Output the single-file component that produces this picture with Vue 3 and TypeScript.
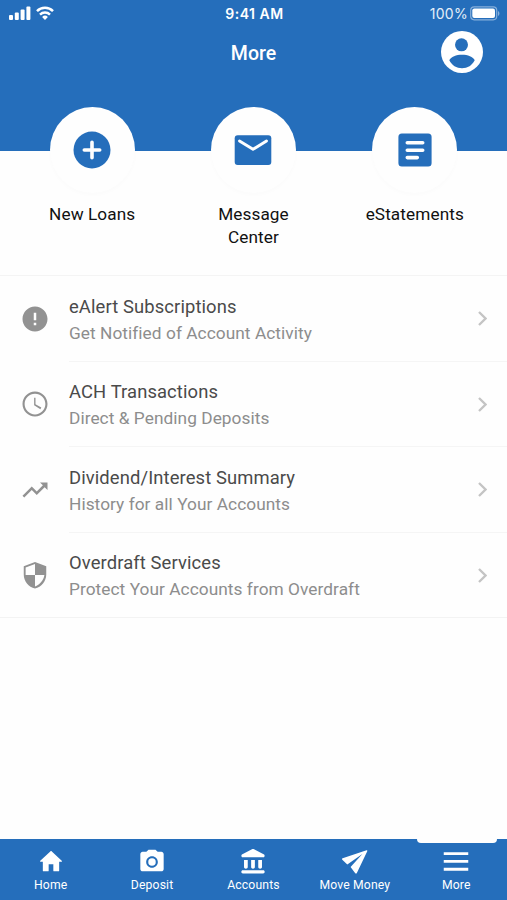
<script setup lang="ts">
interface Shortcut {
  icon: 'plus' | 'mail' | 'doc'
  label: string
}
interface Row {
  title: string
  text: string
  path: string
}
interface Tab {
  label: string
  path: string
  active?: boolean
}

const shortcuts: Shortcut[] = [
  { icon: 'plus', label: 'New Loans' },
  { icon: 'mail', label: 'Message Center' },
  { icon: 'doc', label: 'eStatements' },
]

const rows: Row[] = [
  {
    title: 'eAlert Subscriptions',
    text: 'Get Notified of Account Activity',
    path: 'M12 2C6.480 2 2 6.480 2 12s4.480 10 10 10 10-4.480 10-10S17.520 2 12 2zm1 15h-2v-2h2v2zm0-4h-2V7h2v6z',
  },
  {
    title: 'ACH Transactions',
    text: 'Direct & Pending Deposits',
    path: 'M11.990 2C6.470 2 2 6.480 2 12s4.470 10 9.990 10C17.520 22 22 17.520 22 12S17.520 2 11.990 2zM12 20.300c-4.600 0-8.300-3.700-8.300-8.300s3.700-8.300 8.300-8.300 8.300 3.700 8.300 8.300-3.700 8.300-8.300 8.300zm.4-13.300H11.300v6l5 3.100.75-1.230-4.650-2.700z',
  },
  {
    title: 'Dividend/Interest Summary',
    text: 'History for all Your Accounts',
    path: 'M16 6l2.290 2.290-4.880 4.880-4-4L2 16.590 3.410 18l6-6 4 4 6.300-6.290L22 12V6z',
  },
  {
    title: 'Overdraft Services',
    text: 'Protect Your Accounts from Overdraft',
    path: 'M12 1.500L3 5v6.500c0 5.300 3.840 10 9 11.300 5.160-1.300 9-6 9-11.300V5l-9-3.500zm0 10.490h7.500c-.53 4.120-3.780 7.990-7.500 9.140V12H4.500V6l7.500-2.900v8.890z',
  },
]

const tabs: Tab[] = [
  { label: 'Home', path: 'M10 19.500v-5.500h4v5.500c0 .3.2.5.5.5H18.500c.3 0 .5-.2.5-.5V11.800h1.900c.5 0 .7-.6.3-.9L12.700 2.900c-.4-.3-.9-.3-1.300 0L2.800 10.900c-.3.3-.1.900.3.900H5v7.700c0 .3.2.5.5.5h4c.3 0 .5-.2.5-.5z' },
  { label: 'Deposit', path: 'M12 8.800a3.200 3.200 0 1 0 0 6.400a3.200 3.200 0 1 0 0-6.400zM9 1.500L7.170 3.300H4c-1.100 0-2 .9-2 2v12.700c0 1.100.9 2 2 2h16c1.100 0 2-.9 2-2V5.300c0-1.100-.9-2-2-2h-3.170L15 1.500H9zm3 15.500c-2.760 0-5-2.240-5-5s2.240-5 5-5 5 2.240 5 5-2.240 5-5 5z' },
  { label: 'Accounts', path: 'M4.300 10.200v6c0 .8.700 1.500 1.600 1.500s1.600-.7 1.600-1.500v-6zM10.400 10.200v6c0 .8.700 1.500 1.600 1.500s1.600-.7 1.600-1.500v-6zM16.500 10.200v6c0 .8.700 1.500 1.600 1.500s1.600-.7 1.600-1.500v-6zM3.300 19h17.400c.9 0 1.300.600 1.300 1.400s-.5 1.400-1.300 1.400H3.300c-.8 0-1.300-.6-1.300-1.400s.5-1.400 1.300-1.400zM11.100 1.100L2.500 5.600c-.8.500-.5 2.300.5 2.300h18c1 0 1.300-1.800.5-2.300l-8.600-4.500c-.6-.3-1.200-.3-1.800 0z' },
  { label: 'Move Money', path: 'M21.900 1.900L1.400 8.800c-.6.200-.7.800-.3 1.200l4.300 4.200L18.300 5.100 8.200 16.200l4 5.400c.4.500 1.100.5 1.400-.1L22.500 2.700c.2-.5-.1-.9-.6-.8z' },
  { label: 'More', path: 'M1.500 3.600h21v2.400h-21zM1.500 10.300h21v2.400h-21zM1.500 17h21v2.400h-21z', active: true },
]
</script>

<template>
  <div class="screen">
    <header class="header">
      <div class="status">
        <div class="signals">
          <svg class="bars" viewBox="0 0 22 14">
            <rect x="0" y="9" width="4" height="5" rx="1" />
            <rect x="5.800" y="6.500" width="4" height="7.500" rx="1" />
            <rect x="11.600" y="3.500" width="4" height="10.500" rx="1" />
            <rect x="17.400" y="0.500" width="4" height="13.500" rx="1" />
          </svg>
          <svg class="wifi" viewBox="0 0 18 14">
            <path d="M1 5.100a11.300 11.300 0 0 1 16 0M4 8.600a7.200 7.200 0 0 1 10 0" />
            <path class="dot" d="M9 14l-2.900-3a4.200 4.200 0 0 1 5.800 0z" />
          </svg>
        </div>
        <div class="time">9:41 AM</div>
        <div class="power">
          <span>100%</span>
          <svg class="battery" viewBox="0 0 30 15">
            <rect class="case" x="0.700" y="0.800" width="26" height="13" rx="3.500" />
            <rect x="2.300" y="2.500" width="22.700" height="9.600" rx="2" />
            <path class="tip" d="M28 5v5c1.900-.8 1.900-4.200 0-5z" />
          </svg>
        </div>
      </div>
      <div class="bar">
        <h1>More</h1>
        <svg class="avatar" viewBox="0 0 42 42">
          <circle cx="21" cy="21" r="21" fill="#fff" />
          <circle cx="20.500" cy="13.800" r="6.500" fill="#256ebb" />
          <path d="M8.300 29.300c1.500-3.700 7-5.600 12.700-5.600s11.200 1.900 12.700 5.600c-2.500 5-7.200 8-12.700 8s-10.200-3-12.700-8z" fill="#256ebb" />
        </svg>
      </div>
    </header>

    <section class="shortcuts">
      <div v-for="s in shortcuts" :key="s.label" class="shortcut">
        <div class="disc">
          <svg v-if="s.icon === 'plus'" viewBox="0 0 42 42">
            <circle cx="21" cy="21" r="18.500" fill="#256ebb" />
            <path d="M21 13.300v15.400M13.300 21h15.400" class="stroke" />
          </svg>
          <svg v-else-if="s.icon === 'mail'" viewBox="0 0 42 42">
            <rect x="2.700" y="6.300" width="36.600" height="29.700" rx="3" fill="#256ebb" />
            <path d="M7.500 12L21 20.300 34.500 12" class="stroke thin" />
          </svg>
          <svg v-else viewBox="0 0 42 42">
            <rect x="4.400" y="4.400" width="33.200" height="33.200" rx="3.500" fill="#256ebb" />
            <path d="M13.300 13.800h15.400M13.300 21.200h15.400M13.300 28.600h10" class="stroke" />
          </svg>
        </div>
        <div class="caption">{{ s.label }}</div>
      </div>
    </section>

    <ul class="list">
      <li v-for="r in rows" :key="r.title" class="row">
        <svg class="row-icon" viewBox="0 0 24 24"><path :d="r.path" /></svg>
        <div class="row-body">
          <div class="row-text">
            <div class="row-title">{{ r.title }}</div>
            <div class="row-sub">{{ r.text }}</div>
          </div>
          <svg class="chevron" viewBox="0 0 9 15"><path d="M1 1l6.500 6.500L1 14" /></svg>
        </div>
      </li>
    </ul>

    <nav class="tabs">
      <div v-for="t in tabs" :key="t.label" class="tab" :class="{ active: t.active }">
        <svg viewBox="0 0 24 24"><path :d="t.path" /></svg>
        <span>{{ t.label }}</span>
      </div>
    </nav>
  </div>
</template>

<style>
body {
  background: #fefefe;
}
</style>

<style scoped>
.screen {
  display: flex;
  flex-direction: column;
  height: 900px;
  width: 507px;
  overflow: hidden;
  background: #fefefe;
  font-family: Roboto, sans-serif;
}
.header {
  flex: none;
  height: 151px;
  background: #256ebb;
  color: #fff;
}
.status {
  display: grid;
  grid-template-columns: 1fr auto 1fr;
  align-items: center;
  height: 26px;
  padding: 0 7px 0 9px;
  font-family: Inter, sans-serif;
}
.signals {
  display: flex;
  align-items: center;
  gap: 5px;
}
.bars {
  width: 22px;
  height: 14px;
  fill: #fff;
}
.wifi {
  width: 18px;
  height: 14px;
  fill: none;
  stroke: #fff;
  stroke-width: 2.500;
}
.wifi .dot {
  fill: #fff;
  stroke: none;
}
.time {
  margin-top: 1px;
  font-size: 14px;
  font-weight: 600;
  letter-spacing: 0.500px;
}
.power {
  display: flex;
  justify-content: flex-end;
  align-items: center;
  gap: 2px;
  font-size: 14px;
  letter-spacing: 0.300px;
  color: #e4eef8;
}
.battery {
  width: 30px;
  height: 15px;
  fill: #fff;
}
.battery .case {
  fill: none;
  stroke: #86afdb;
  stroke-width: 1.200;
}
.battery .tip {
  fill: #86afdb;
}
.bar {
  display: grid;
  grid-template-columns: 1fr auto 1fr;
  align-items: center;
  height: 52px;
  padding-right: 24px;
  padding-left: 24px;
}
h1 {
  grid-column: 2;
  margin: 3px 0 0;
  font-size: 19.500px;
  font-weight: 500;
  line-height: 24px;
}
.avatar {
  justify-self: end;
  width: 42px;
  height: 42px;
}
.shortcuts {
  flex: none;
  display: grid;
  grid-template-columns: repeat(3, 161.300px);
  justify-content: center;
  height: 168px;
  margin-top: -44px;
  border-bottom: 1px solid #f4f4f4;
}
.shortcut {
  display: flex;
  flex-direction: column;
  align-items: center;
}
.disc {
  display: flex;
  align-items: center;
  justify-content: center;
  width: 85px;
  height: 86px;
  border-radius: 50%;
  background: #fefefe;
  box-shadow: 0 2px 4px rgba(0, 0, 0, 0.015);
}
.disc svg {
  width: 42px;
  height: 42px;
}
.stroke {
  fill: none;
  stroke: #fefefe;
  stroke-width: 3.600;
  stroke-linecap: round;
  stroke-linejoin: round;
}
.stroke.thin {
  stroke-width: 2.900;
}
.caption {
  width: 110px;
  margin-top: 10px;
  text-align: center;
  font-size: 17.200px;
  letter-spacing: 0.100px;
  line-height: 22.500px;
  color: #111;
}
.list {
  flex: none;
  margin: 0;
  padding: 0;
  list-style: none;
}
.row {
  display: flex;
  align-items: center;
  box-sizing: border-box;
  height: 85.500px;
  padding-left: 20px;
}
.row:last-child {
  border-bottom: 1px solid #f3f3f3;
}
.row-icon {
  flex: none;
  width: 30px;
  height: 30px;
  margin-right: 19px;
  fill: #929292;
}
.row:last-child .row-icon {
  margin-top: 1px;
}
.row-body {
  flex: 1;
  display: flex;
  align-items: center;
  justify-content: space-between;
  box-sizing: border-box;
  height: 100%;
  padding-right: 20px;
  border-bottom: 1px solid #f5f5f5;
}
.row:last-child .row-body {
  border-bottom: 0;
}
.row-text {
  padding-top: 3px;
}
.row-title {
  font-size: 18.400px;
  letter-spacing: 0.110px;
  line-height: 26px;
  color: #4a4a4a;
}
.row-sub {
  font-size: 17.300px;
  letter-spacing: 0.050px;
  line-height: 26px;
  color: #8d8d8d;
}
.chevron {
  width: 9px;
  height: 15px;
  margin-top: 1px;
  fill: none;
  stroke: #c4c4c4;
  stroke-width: 2.300;
}
.tabs {
  flex: none;
  display: grid;
  grid-template-columns: repeat(5, 1fr);
  height: 61px;
  margin-top: auto;
  background: #256ebb;
}
.tab {
  position: relative;
  display: flex;
  flex-direction: column;
  align-items: center;
  padding-top: 9px;
  color: #fff;
  font-size: 12.200px;
  letter-spacing: 0.150px;
  line-height: 16px;
}
.tab svg {
  width: 28px;
  height: 28px;
  margin-bottom: 1px;
  fill: #fff;
}
.tab.active::before {
  content: '';
  position: absolute;
  top: -1px;
  left: 11px;
  width: 80px;
  height: 4.500px;
  border-radius: 0 0 4px 4px;
  background: #fefefe;
}
</style>
